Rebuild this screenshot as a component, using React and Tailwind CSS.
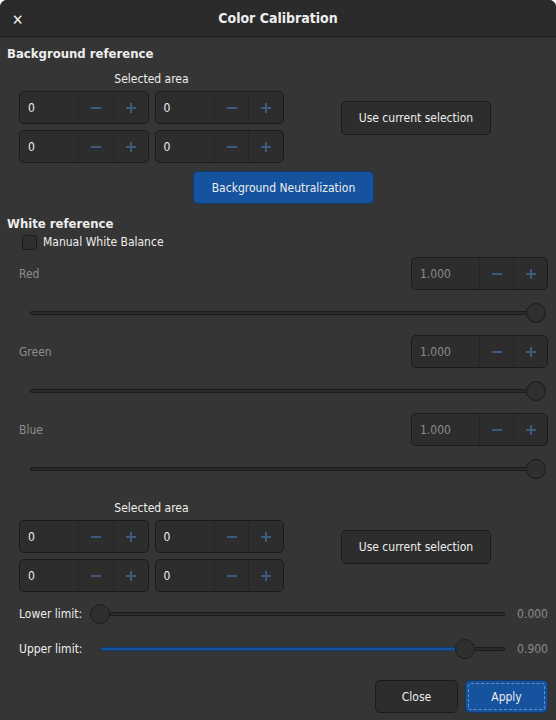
import React from 'react';

const font = "font-['DejaVu_Sans_Condensed','DejaVu_Sans',sans-serif]";

const Minus = () => (
  <svg width="12" height="12" viewBox="0 0 12 12">
    <rect x="1" y="5" width="10" height="2" fill="#3d5a80" />
  </svg>
);

const Plus = () => (
  <svg width="12" height="12" viewBox="0 0 12 12">
    <rect x="1" y="5" width="10" height="2" fill="#3d5a80" />
    <rect x="5" y="1" width="2" height="10" fill="#3d5a80" />
  </svg>
);

const Spin = ({ value, dim = false, entryW = 'w-[59px]', btnW = 'w-[35px]' }) => (
  <div className="flex h-[33px] rounded-[5px] border border-[#1b1b1b] bg-[#2d2d2d]">
    <div className={`${entryW} flex items-center pl-[8px] text-[12px] ${dim ? 'text-[#8b8b8b]' : 'text-[#eeeeec]'}`}>
      {value}
    </div>
    <div className={`${btnW} flex items-center justify-center border-l border-[#262626]`}>
      <Minus />
    </div>
    <div className={`${btnW} flex items-center justify-center border-l border-[#262626]`}>
      <Plus />
    </div>
  </div>
);

const Knob = () => (
  <div className="w-[20px] h-[20px] rounded-full bg-[#2f2f2f] border border-[#1b1b1b] shrink-0" />
);

// track with knob at a fraction of its length
const Slider = ({ pos, fill = false }) => (
  <div className="relative h-[20px] flex-1">
    <div className="absolute left-0 right-0 top-[8px] h-[4px] rounded-full bg-[#2a2a2a] border border-[#1b1b1b]" />
    {fill && (
      <div
        className="absolute left-0 top-[8px] h-[4px] rounded-full bg-[#15539e] border border-[#0f3b71]"
        style={{ width: `${pos * 100}%` }}
      />
    )}
    <div className="absolute top-0" style={{ left: `calc(${pos * 100}% - 10px)` }}>
      <Knob />
    </div>
  </div>
);

const SelectionBlock = () => (
  <div className="flex pl-[12px]">
    <div className="flex flex-col w-[265px]">
      <div className="h-[14px] leading-[14px] text-[12px] text-[#eeeeec] text-center">Selected area</div>
      <div className="mt-[5px] grid grid-cols-2 gap-[6px] w-[265px]">
        <Spin value="0" />
        <Spin value="0" />
        <Spin value="0" />
        <Spin value="0" />
      </div>
    </div>
    <div className="flex-1 flex items-center justify-center">
      <button className="w-[150px] h-[34px] rounded-[5px] border border-[#1b1b1b] bg-[#2d2d2d] text-[12px] text-[#eeeeec]">
        Use current selection
      </button>
    </div>
  </div>
);

const Channel = ({ label }) => (
  <div className="flex flex-col pl-[12px]">
    <div className="flex items-center justify-between">
      <span className="text-[12px] text-[#8b8e8f]">{label}</span>
      <div className="w-[137px]">
        <Spin value="1.000" dim entryW="w-[67px]" btnW="w-[34px]" />
      </div>
    </div>
    <div className="flex mt-[13px] pl-[11px] pr-[12px]">
      <Slider pos={1} />
    </div>
  </div>
);

const App = () => {
  return (
    <div className={`w-[556px] h-[720px] bg-[#353535] flex flex-col overflow-hidden rounded-t-[7px] ${font}`}>
      {/* Header bar */}
      <div className="relative h-[37px] shrink-0 bg-[#2b2b2b] border-b border-[#1b1b1b] flex items-center justify-center">
        <span className="absolute left-[12px] top-[9px] text-[#eeeeec] text-[15px] font-bold">✕</span>
        <span className="text-[#eeeeec] text-[14px] font-bold">Color Calibration</span>
      </div>

      <div className="flex flex-col pl-[7px] pr-[8px]">
        {/* Background reference */}
        <div className="mt-[9px] h-[16px] leading-[16px] text-[13px] font-bold text-[#eeeeec]">Background reference</div>
        <div className="mt-[10px]">
          <SelectionBlock />
        </div>
        <div className="mt-[8px] flex justify-center pl-[12px]">
          <button className="w-[181px] h-[33px] rounded-[5px] border border-[#0f3b71] bg-[#15539e] text-[12px] text-[#eeeeec]">
            Background Neutralization
          </button>
        </div>

        {/* White reference */}
        <div className="mt-[12px] h-[16px] leading-[16px] text-[13px] font-bold text-[#eeeeec]">White reference</div>
        <div className="mt-[2px] flex items-center pl-[15px] h-[16px]">
          <div className="w-[15px] h-[15px] rounded-[3px] bg-[#2f2f2f] border border-[#1b1b1b]" />
          <span className="ml-[6px] text-[12px] text-[#eeeeec]">Manual White Balance</span>
        </div>

        <div className="mt-[7px]">
          <Channel label="Red" />
        </div>
        <div className="mt-[12px]">
          <Channel label="Green" />
        </div>
        <div className="mt-[12px]">
          <Channel label="Blue" />
        </div>

        <div className="mt-[22px]">
          <SelectionBlock />
        </div>

        {/* Limits */}
        <div className="mt-[12px] flex items-center pl-[12px]">
          <span className="w-[81px] text-[12px] text-[#eeeeec]">Lower limit:</span>
          <Slider pos={0} />
          <span className="w-[43px] text-right text-[12px] text-[#8b8b8b]">0.000</span>
        </div>
        <div className="mt-[15px] flex items-center pl-[12px]">
          <span className="w-[81px] text-[12px] text-[#eeeeec]">Upper limit:</span>
          <Slider pos={0.9} fill />
          <span className="w-[43px] text-right text-[12px] text-[#8b8b8b]">0.900</span>
        </div>

        {/* Dialog buttons */}
        <div className="mt-[21px] flex justify-end gap-[7px]">
          <button className="w-[83px] h-[33px] rounded-[5px] border border-[#1b1b1b] bg-[#2d2d2d] text-[12px] text-[#eeeeec]">
            Close
          </button>
          <button className="w-[83px] h-[33px] rounded-[5px] border border-[#0f3b71] bg-[#15539e] p-[2px]">
            <div className="w-full h-full rounded-[3px] border border-dashed border-[#eeeeec]/40 flex items-center justify-center text-[12px] text-[#eeeeec]">
              Apply
            </div>
          </button>
        </div>
      </div>
    </div>
  );
};

export default App;
